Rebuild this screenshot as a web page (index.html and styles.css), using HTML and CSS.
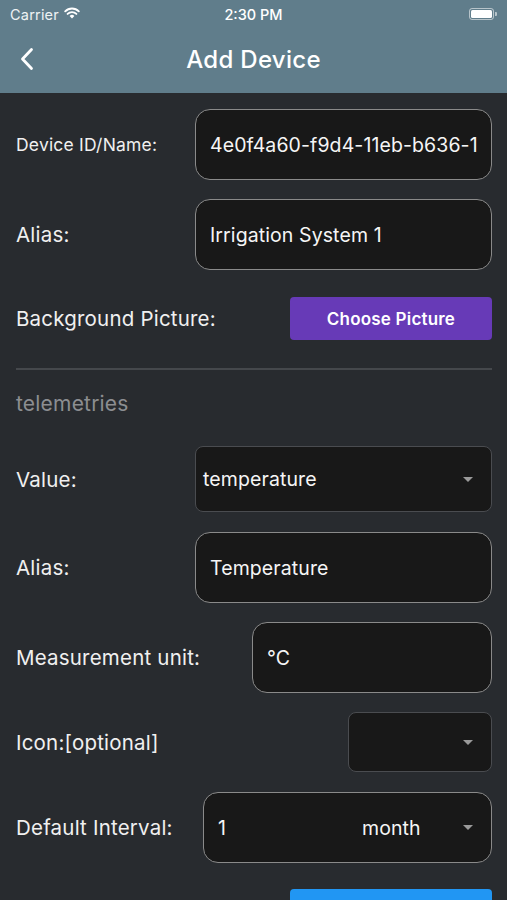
FILE: index.html
```html
<!DOCTYPE html>
<html>
<head>
<meta charset="utf-8">
<link rel="stylesheet" href="styles.css">
</head>
<body>
<div class="app">
  <header class="appbar">
    <div class="status">
      <div class="status-left">
        <span class="carrier">Carrier</span>
        <svg class="wifi" width="16" height="12" viewBox="0 0 16 12">
          <path d="M8 11.5 L5.6 8.9 A3.4 3.4 0 0 1 10.4 8.9 Z" fill="#fff"/>
          <path d="M3.6 6.9 A6.3 6.3 0 0 1 12.4 6.9" fill="none" stroke="#fff" stroke-width="1.9" stroke-linecap="round"/>
          <path d="M1.2 4.3 A9.6 9.6 0 0 1 14.8 4.3" fill="none" stroke="#fff" stroke-width="1.9" stroke-linecap="round"/>
        </svg>
      </div>
      <div class="time">2:30 PM</div>
      <div class="status-right">
        <span class="battery"><span class="battery-fill"></span></span>
        <span class="battery-cap"></span>
      </div>
    </div>
    <div class="navbar">
      <svg class="back" width="14" height="24" viewBox="0 0 14 24">
        <path d="M11.5 2.5 L2.5 12 L11.5 21.5" fill="none" stroke="#fff" stroke-width="2.8" stroke-linecap="round" stroke-linejoin="round"/>
      </svg>
      <h1 class="title">Add Device</h1>
    </div>
  </header>

  <main class="form">
    <div class="row r-id">
      <label class="label small">Device ID/Name:</label>
      <div class="field text w-full">4e0f4a60-f9d4-11eb-b636-1</div>
    </div>
    <div class="row r-alias">
      <label class="label">Alias:</label>
      <div class="field text w-full">Irrigation System 1</div>
    </div>
    <div class="row r-bg">
      <label class="label">Background Picture:</label>
      <button class="btn purple">Choose Picture</button>
    </div>
    <hr class="divider">
    <div class="section">telemetries</div>
    <div class="row r-value">
      <label class="label">Value:</label>
      <div class="field select w-full">
        <span class="sel-text">temperature</span>
        <span class="caret"></span>
      </div>
    </div>
    <div class="row r-alias2">
      <label class="label">Alias:</label>
      <div class="field text w-full">Temperature</div>
    </div>
    <div class="row r-unit">
      <label class="label">Measurement unit:</label>
      <div class="field text w-unit">°C</div>
    </div>
    <div class="row r-icon">
      <label class="label">Icon:[optional]</label>
      <div class="field select w-icon">
        <span class="sel-text"></span>
        <span class="caret"></span>
      </div>
    </div>
    <div class="row r-interval">
      <label class="label">Default Interval:</label>
      <div class="field text interval w-interval">
        <span class="num">1</span>
        <span class="unit">month</span>
        <span class="caret"></span>
      </div>
    </div>
    <div class="row r-save">
      <button class="btn blue" aria-label="Save"></button>
    </div>
  </main>
</div>
</body>
</html>
```

FILE: styles.css
```css
* { box-sizing: border-box; }
html, body { margin: 0; padding: 0; }
body {
  background: #282b2f;
  font-family: Inter, "Noto Sans", "Liberation Sans", sans-serif;
  color: #f2f2f2;
  width: 507px;
  height: 900px;
  overflow: hidden;
}
.appbar {
  background: #607d8b;
  height: 93px;
  color: #fff;
}
.status {
  height: 28px;
  display: flex;
  align-items: center;
  justify-content: space-between;
  padding: 0 10px 0 10px;
  position: relative;
}
.status-left { display: flex; align-items: center; gap: 5px; }
.carrier { font-size: 14.5px; letter-spacing: 0.2px; color: #eef2f4; }
.wifi { margin-top: -2px; }
.time {
  position: absolute;
  left: 0; right: 0;
  text-align: center;
  font-size: 14.5px;
  font-weight: 500;
  pointer-events: none;
}
.status-right { display: flex; align-items: center; }
.battery {
  width: 25px; height: 12px;
  border: 1px solid rgba(255,255,255,0.55);
  border-radius: 3px;
  padding: 1px;
  display: flex;
}
.battery-fill { flex: 1; background: #fff; border-radius: 1.5px; }
.battery-cap {
  width: 2px; height: 4px;
  background: rgba(255,255,255,0.55);
  border-radius: 0 1px 1px 0;
  margin-left: 1px;
}
.navbar {
  height: 65px;
  display: flex;
  align-items: center;
  justify-content: center;
  position: relative;
}
.back { position: absolute; left: 20px; top: 19px; }
.title {
  margin: 0;
  font-size: 24px;
  font-weight: 500;
  letter-spacing: 0.3px;
  padding-bottom: 2px;
}
.form {
  padding: 16px 15px 0 16px;
  display: flex;
  flex-direction: column;
}
.row {
  display: flex;
  align-items: center;
  justify-content: space-between;
}
.label { font-size: 20.5px; letter-spacing: 0.2px; color: #f0f0f0; }
.label.small { font-size: 17.5px; }
.field {
  background: #181818;
  border: 1.5px solid #8a8a8a;
  border-radius: 15px;
  height: 71px;
  display: flex;
  align-items: center;
  font-size: 19.5px;
  letter-spacing: 0.1px;
  color: #f5f5f5;
  padding: 0 14px;
  white-space: nowrap;
  overflow: hidden;
}
.field.select {
  border: 1px solid #4a4c50;
  border-radius: 8px;
  height: 66px;
  padding: 0 18px 0 7px;
  font-size: 19.5px;
}
.sel-text { flex: 1; }
.caret {
  width: 0; height: 0;
  border-left: 5px solid transparent;
  border-right: 5px solid transparent;
  border-top: 5px solid #9a9a9a;
}
.w-full { width: 297px; }
.w-unit { width: 240px; }
.w-icon { width: 144px; height: 60px !important; }
.w-interval { width: 289px; }
.interval { padding: 0 18px 0 14px; }
.interval .num { width: 144px; }
.interval .unit { flex: 1; }
.btn {
  border: none;
  border-radius: 4px;
  width: 202px;
  height: 43px;
  color: #fff;
  font-family: inherit;
  font-size: 17px;
  font-weight: 600;
  letter-spacing: 0.2px;
  padding: 0;
}
.purple { background: #673ab7; }
.blue { background: #2196f3; }
.r-alias { margin-top: 19px; }
.r-bg { margin-top: 27px; }
.divider {
  margin: 28px 0 0 0;
  border: none;
  height: 2px;
  background: #45484c;
}
.section {
  margin-top: 21px;
  font-size: 21px;
  letter-spacing: 0.2px;
  color: #8c8e91;
}
.r-value { margin-top: 30px; }
.r-alias2 { margin-top: 20px; }
.r-unit { margin-top: 19px; }
.r-icon { margin-top: 19px; }
.r-interval { margin-top: 20px; }
.r-save { margin-top: 26px; justify-content: flex-end; }
```
